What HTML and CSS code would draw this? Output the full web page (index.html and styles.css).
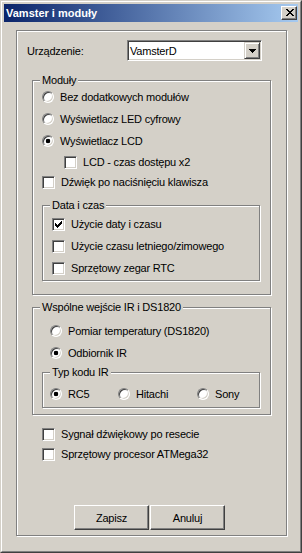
FILE: index.html
```html
<!DOCTYPE html>
<html lang="pl">
<head>
<meta charset="utf-8">
<title>Vamster i moduły</title>
<link rel="stylesheet" href="styles.css">
</head>
<body>
<div class="window">
  <div class="frame">
    <div class="titlebar">
      <span class="title">Vamster i moduły</span>
      <span class="close">
        <svg width="8" height="7" viewBox="0 0 8 7" shape-rendering="crispEdges"><path fill="#000" d="M0 0h2v1h-2zM6 0h2v1h-2zM1 1h2v1h-2zM5 1h2v1h-2zM2 2h4v1h-4zM3 3h2v1h-2zM2 4h4v1h-4zM1 5h2v1h-2zM5 5h2v1h-2zM0 6h2v1h-2zM6 6h2v1h-2z"/></svg>
      </span>
    </div>

    <div class="panel">
      <div class="device-row">
        <span class="device-label">Urządzenie:</span>
        <div class="combo">
          <span class="combo-value">VamsterD</span>
          <span class="combo-btn">
            <svg width="7" height="4" viewBox="0 0 7 4" shape-rendering="crispEdges"><path fill="#000" d="M0 0h7v1h-7zM1 1h5v1h-5zM2 2h3v1h-3zM3 3h1v1h-1z"/></svg>
          </span>
        </div>
      </div>

      <div class="group wide g-modules">
        <div class="group-title">Moduły</div>
        <div class="opt in9 first-mod"><span class="radio"></span><span>Bez dodatkowych modułów</span></div>
        <div class="opt in9"><span class="radio"></span><span>Wyświetlacz LED cyfrowy</span></div>
        <div class="opt in9"><span class="radio on"></span><span>Wyświetlacz LCD</span></div>
        <div class="opt h20 in31"><span class="check"></span><span>LCD - czas dostępu x2</span></div>
        <div class="opt h21 in9"><span class="check"></span><span>Dźwięk po naciśnięciu klawisza</span></div>

        <div class="group narrow g-date">
          <div class="group-title">Data i czas</div>
          <div class="opt in9 first-date"><span class="check"><svg width="7" height="7" viewBox="0 0 7 7" shape-rendering="crispEdges"><path fill="#000" d="M6 0h1v1h-1zM5 1h2v1h-2zM0 2h1v1h-1zM4 2h3v1h-3zM0 3h2v1h-2zM3 3h3v1h-3zM0 4h5v1h-5zM1 5h3v1h-3zM2 6h1v1h-1z"/></svg></span><span>Użycie daty i czasu</span></div>
          <div class="opt in9"><span class="check"></span><span>Użycie czasu letniego/zimowego</span></div>
          <div class="opt in9"><span class="check"></span><span>Sprzętowy zegar RTC</span></div>
        </div>
      </div>

      <div class="group wide g-ir">
        <div class="group-title">Wspólne wejście IR i DS1820</div>
        <div class="opt in17 first-ir"><span class="radio"></span><span>Pomiar temperatury (DS1820)</span></div>
        <div class="opt in17"><span class="radio on"></span><span>Odbiornik IR</span></div>

        <div class="group narrow g-code">
          <div class="group-title">Typ kodu IR</div>
          <div class="code-row">
            <div class="opt code-rc5"><span class="radio on"></span><span>RC5</span></div>
            <div class="opt code-hit"><span class="radio"></span><span>Hitachi</span></div>
            <div class="opt"><span class="radio"></span><span>Sony</span></div>
          </div>
        </div>
      </div>

      <div class="extras">
        <div class="opt h20 in25"><span class="check"></span><span>Sygnał dźwiękowy po resecie</span></div>
        <div class="opt h20 in25"><span class="check"></span><span>Sprzętowy procesor ATMega32</span></div>
      </div>

      <div class="buttons">
        <button class="btn" type="button">Zapisz</button>
        <button class="btn" type="button">Anuluj</button>
      </div>
    </div>
  </div>
</div>
</body>
</html>
```

FILE: styles.css
```css
html, body {
  margin: 0;
  padding: 0;
  background: #d4d0c8;
}

.window {
  width: 302px;
  height: 553px;
  box-sizing: border-box;
  border: 1px solid;
  border-color: #d4d0c8 #404040 #404040 #d4d0c8;
  background: #d4d0c8;
  font-family: "Liberation Sans", Arial, sans-serif;
  font-size: 11px;
  letter-spacing: -0.2px;
  color: #000;
}

.frame {
  height: 100%;
  box-sizing: border-box;
  border: 1px solid;
  border-color: #fff #808080 #808080 #fff;
  padding: 2px;
  display: flex;
  flex-direction: column;
}

.titlebar {
  height: 18px;
  flex: none;
  display: flex;
  align-items: center;
  justify-content: space-between;
  padding: 0 1px 0 2px;
  background: linear-gradient(to right, #0a246a, #a6caf0);
}

.title {
  color: #fff;
  font-weight: bold;
  letter-spacing: 0;
  line-height: 13px;
}

.close {
  width: 16px;
  height: 14px;
  box-sizing: border-box;
  background: #d4d0c8;
  border: 1px solid;
  border-color: #fff #404040 #404040 #fff;
  box-shadow: inset -1px -1px #808080;
  display: flex;
  align-items: center;
  justify-content: center;
}

.close svg {
  display: block;
  margin: 0 0 1px 1px;
}

.panel {
  margin: 8px 0 0 12px;
  width: 271px;
  height: 506px;
  box-sizing: border-box;
  border: 1px solid #808080;
  box-shadow: inset 1px 1px #fff, 1px 1px #fff;
}

.device-row {
  display: flex;
  align-items: center;
  height: 21px;
  margin-top: 9px;
}

.device-label {
  margin-left: 10px;
  width: 100px;
}

.combo {
  width: 135px;
  height: 21px;
  box-sizing: border-box;
  border: 1px solid;
  border-color: #808080 #fff #fff #808080;
  box-shadow: inset 1px 1px #404040, inset -1px -1px #d4d0c8;
  background: #fff;
  padding: 1px;
  display: flex;
  align-items: center;
}

.combo-value {
  flex: 1;
  padding-left: 1px;
}

.combo-btn {
  width: 16px;
  height: 17px;
  box-sizing: border-box;
  border: 1px solid;
  border-color: #d4d0c8 #404040 #404040 #d4d0c8;
  box-shadow: inset 1px 1px #fff, inset -1px -1px #808080;
  background: #d4d0c8;
  display: flex;
  align-items: center;
  justify-content: center;
}

.combo-btn svg {
  display: block;
}

/* group boxes */
.group {
  box-sizing: border-box;
  border: 1px solid #808080;
  box-shadow: inset 1px 1px #fff, 1px 1px #fff;
}

.group.wide {
  width: 239px;
  margin-left: 15px;
}

.group.narrow {
  width: 218px;
  margin-left: 9px;
}

.group-title {
  width: max-content;
  margin: -7px 0 0 7px;
  padding: 0 2px;
  line-height: 13px;
  background: #d4d0c8;
}

.g-modules {
  margin-top: 19px;
  padding-bottom: 13px;
}

.first-mod {
  margin-top: -1px;
}

.g-date {
  margin-top: 12px;
  padding-bottom: 1px;
}

.first-date {
  margin-top: 1px;
}

.g-ir {
  margin-top: 12px;
  padding-bottom: 6px;
}

.first-ir {
  margin-top: 6px;
}

.g-code {
  margin-top: 8px;
  padding-bottom: 2px;
}

.code-row {
  display: flex;
  margin-top: 4px;
  padding-left: 7px;
}

.code-rc5 {
  width: 68px;
}

.code-hit {
  width: 79px;
}

/* option rows */
.opt {
  display: flex;
  align-items: center;
  gap: 6px;
  height: 22px;
  line-height: 13px;
}

.opt.h20 { height: 20px; }
.opt.h21 { height: 21px; }
.in9 { padding-left: 9px; }
.in17 { padding-left: 17px; }
.in25 { padding-left: 25px; }
.in31 { padding-left: 31px; }

.radio {
  flex: none;
  width: 12px;
  height: 12px;
  box-sizing: border-box;
  border-radius: 50%;
  border: 1px solid;
  border-color: #808080 #fff #fff #808080;
  background: #fff;
  box-shadow: inset 1px 1px #404040, inset -1px -1px #d4d0c8;
}

.radio.on {
  background: radial-gradient(circle at 50% 50%, #000 0 2px, #fff 2.6px);
}

.check {
  flex: none;
  width: 13px;
  height: 13px;
  box-sizing: border-box;
  border: 1px solid;
  border-color: #808080 #fff #fff #808080;
  box-shadow: inset 1px 1px #404040, inset -1px -1px #d4d0c8;
  background: #fff;
  display: flex;
  align-items: center;
  justify-content: center;
}

.check svg {
  display: block;
}

.extras {
  margin-top: 9px;
}

.buttons {
  display: flex;
  gap: 1px;
  margin: 41px 0 0 57px;
}

.btn {
  width: 75px;
  height: 25px;
  box-sizing: border-box;
  margin: 0;
  padding: 0;
  border: 1px solid;
  border-color: #fff #404040 #404040 #fff;
  box-shadow: inset -1px -1px #808080;
  background: #d4d0c8;
  font: inherit;
  letter-spacing: inherit;
  color: #000;
}
```
